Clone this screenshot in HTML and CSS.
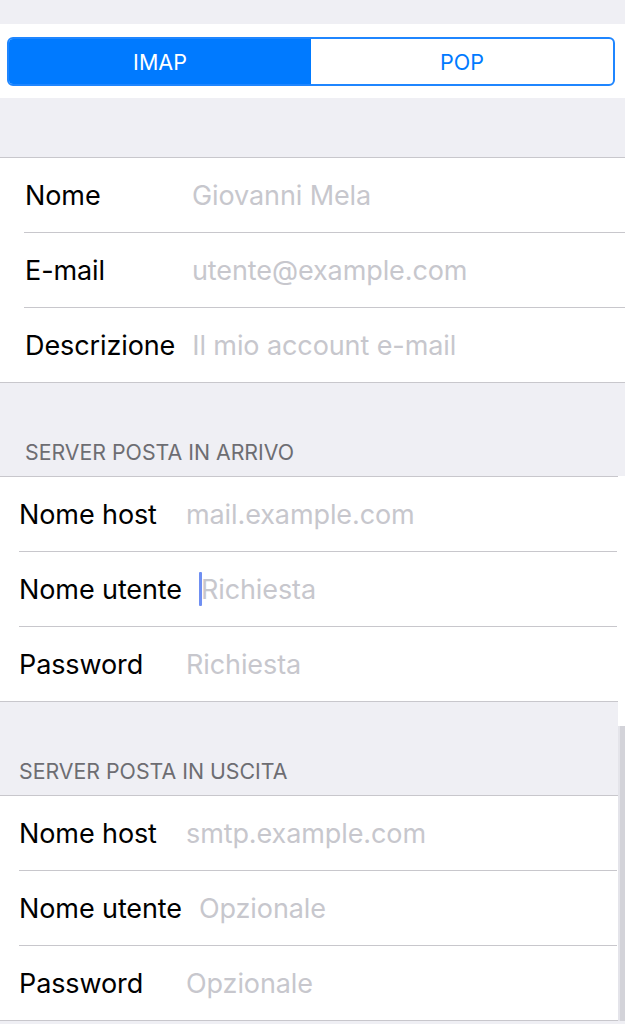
FILE: index.html
```html
<!DOCTYPE html>
<html lang="it">
<head>
<meta charset="utf-8">
<title>Account</title>
<link rel="stylesheet" href="styles.css">
</head>
<body>
<div class="page">
  <div class="top-gap"></div>
  <div class="seg-band">
    <div class="segmented">
      <div class="seg seg-on">IMAP</div>
      <div class="seg">POP</div>
    </div>
  </div>
  <div class="gap gap-first"></div>
  <div class="group group-a">
    <div class="row"><span class="label">Nome</span><span class="value">Giovanni Mela</span></div>
    <div class="row"><span class="label">E-mail</span><span class="value">utente@example.com</span></div>
    <div class="row row-last"><span class="label">Descrizione</span><span class="value">Il mio account e-mail</span></div>
  </div>
  <div class="gap gap-header gap-header-a"><span class="header">SERVER POSTA IN ARRIVO</span></div>
  <div class="lower">
    <div class="lower-main">
      <div class="group group-b">
        <div class="row"><span class="label">Nome host</span><span class="value">mail.example.com</span></div>
        <div class="row"><span class="label">Nome utente</span><span class="value"><span class="cursor"></span>Richiesta</span></div>
        <div class="row row-last"><span class="label">Password</span><span class="value">Richiesta</span></div>
      </div>
      <div class="gap gap-header gap-header-b"><span class="header">SERVER POSTA IN USCITA</span></div>
      <div class="group group-b">
        <div class="row"><span class="label">Nome host</span><span class="value">smtp.example.com</span></div>
        <div class="row"><span class="label">Nome utente</span><span class="value">Opzionale</span></div>
        <div class="row row-last"><span class="label">Password</span><span class="value">Opzionale</span></div>
      </div>
    </div>
    <div class="lower-edge">
      <div class="edge-light"></div>
      <div class="edge-dark"></div>
    </div>
  </div>
</div>
</body>
</html>
```
FILE: styles.css
```css
html, body {
  margin: 0;
  padding: 0;
}
body {
  background: #efeff4;
  font-family: Inter, Roboto, "Liberation Sans", sans-serif;
  -webkit-font-smoothing: antialiased;
}
.page {
  width: 625px;
  height: 1024px;
  overflow: hidden;
  background: #efeff4;
}
.top-gap {
  height: 24px;
}
.seg-band {
  background: #ffffff;
  height: 74px;
  padding: 13px 10px 0 7px;
  box-sizing: border-box;
}
.segmented {
  display: flex;
  height: 49px;
  border: 2px solid #1f86ff;
  border-radius: 6px;
  box-sizing: border-box;
  overflow: hidden;
}
.seg {
  flex: 1;
  display: flex;
  align-items: center;
  justify-content: center;
  font-size: 21.5px;
  color: #007aff;
}
.seg-on {
  background: #007aff;
  color: #ffffff;
}
.gap-first {
  height: 59px;
}
.group {
  background: #ffffff;
  border-top: 1px solid #c8c7cc;
  border-bottom: 1px solid #c8c7cc;
}
.row {
  height: 74px;
  display: flex;
  align-items: center;
  font-size: 27px;
  letter-spacing: -0.1px;
  border-bottom: 1px solid #c8c7cc;
  box-sizing: content-box;
}
.row-last {
  border-bottom: none;
}
.group-a {
  padding-left: 24px;
}
.group-a .label {
  padding-left: 1px;
}
.group-b {
  padding-left: 19px;
}
.group-b .row {
  margin-right: 1px;
}
.label {
  color: #000000;
  min-width: 150px;
  margin-right: 17px;
  white-space: nowrap;
}
.value {
  color: #c7c7cd;
  white-space: nowrap;
  display: flex;
  align-items: center;
}
.cursor {
  display: inline-block;
  width: 3px;
  height: 34px;
  background: #6f8ff2;
  border-radius: 1px;
  margin-right: -1px;
}
.gap-header {
  height: 93px;
  display: flex;
  align-items: flex-end;
  box-sizing: border-box;
  padding-bottom: 12px;
}
.gap-header-a {
  padding-left: 25px;
}
.gap-header-b {
  padding-left: 19px;
}
.header {
  font-size: 21.3px;
  line-height: 24px;
  color: #6d6d72;
}
.lower {
  display: flex;
}
.lower-main {
  width: 618px;
}
.lower-edge {
  flex: 1;
  display: flex;
  flex-direction: column;
}
.edge-light {
  height: 250px;
  background: #ffffff;
}
.edge-dark {
  flex: 1;
  background: #d3d3d9;
  border-left: 2px solid #e4e4ea;
}
```
